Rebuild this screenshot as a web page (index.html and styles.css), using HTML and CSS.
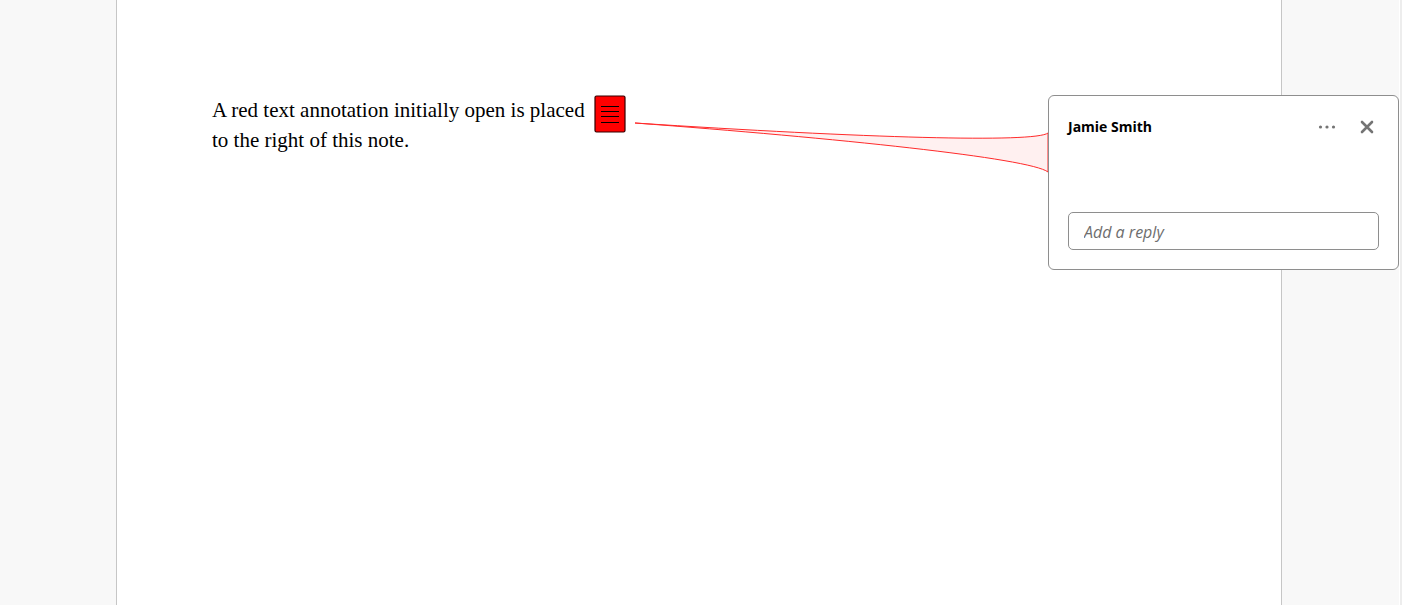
FILE: index.html
```html
<!DOCTYPE html>
<html lang="en">
<head>
    <meta charset="UTF-8">
    <meta name="viewport" content="width=device-width, initial-scale=1.0">
    <title>Text Annotation</title>
    <link rel="stylesheet" href="styles.css">
</head>
<body>
    <div class="viewer">
        <main class="page">
            <p class="note-text">A red text annotation initially open is placed<br>to the right of this note.</p>
            <button type="button" class="note-icon" aria-label="Open annotation">
                <svg width="32" height="38" viewBox="0 0 32 38">
                    <rect x="1" y="1" width="30" height="36" rx="1.5" fill="#f00" stroke="#300" stroke-width="1.2"/>
                    <path d="M7 11.5h18M7 16.5h18M7 21.5h18M7 27.5h18" stroke="#000" stroke-width="1" shape-rendering="crispEdges"/>
                </svg>
            </button>
        </main>

        <!-- Connector from the note icon to its popup -->
        <svg class="connector" viewBox="0 0 414 56" preserveAspectRatio="none">
            <path d="M0 3C230 18 400 23 413 13V52C395 38 200 18 0 3Z" fill="#fff0f0"/>
            <path d="M0 3C230 18 400 23 413 13V52C395 38 200 18 0 3" fill="none" stroke="#ff2a2a"/>
        </svg>

        <section class="popup">
            <header class="popup-header">
                <h2 class="author">Jamie Smith</h2>
                <button type="button" class="icon-button" aria-label="Options">
                    <svg width="18" height="18" viewBox="0 0 18 18" fill="#747474">
                        <circle cx="2.5" cy="9" r="1.6"/>
                        <circle cx="9" cy="9" r="1.6"/>
                        <circle cx="15.5" cy="9" r="1.6"/>
                    </svg>
                </button>
                <button type="button" class="icon-button" aria-label="Close">
                    <svg width="18" height="18" viewBox="0 0 18 18">
                        <path d="M4 4L14 14M14 4L4 14" stroke="#747474" stroke-width="2.6" stroke-linecap="round"/>
                    </svg>
                </button>
            </header>
            <input type="text" class="reply" placeholder="Add a reply" aria-label="Add a reply">
        </section>
    </div>
</body>
</html>
```

FILE: styles.css
```css
* {
    box-sizing: border-box;
}
body {
    margin: 0;
    background: #fff;
}
/* Document area with the scroll gutter on the right */
.viewer {
    position: relative;
    display: flex;
    min-height: 100vh;
    padding: 0 117px 0 116px;
    margin-right: 3px;
    background: #f8f8f8;
    box-shadow: 1px 0 #fff, 3px 0 #ededed;
}
.page {
    display: flex;
    flex: 1;
    align-items: flex-start;
    gap: 9px;
    padding: 95px;
    background: #fff;
    border: solid #c6c6c6;
    border-width: 0 1px;
}
.note-text {
    margin: 0;
    font-family: "Liberation Serif", "Times New Roman", serif;
    font-size: 21px;
    line-height: 30px;
    color: #000;
    white-space: nowrap;
}
button {
    padding: 0;
    border: none;
    background: none;
    cursor: pointer;
}
button svg {
    display: block;
}
/* Popup and connector float over the page */
.connector {
    position: absolute;
    top: 120px;
    left: 635px;
    width: calc(100% - 985px);
    height: 56px;
}
.popup {
    position: absolute;
    top: 95px;
    right: 0;
    width: 351px;
    padding: 20px 19px 19px;
    font-family: "Open Sans", sans-serif;
    background: #fff;
    border: 1px solid #8e8e8e;
    border-radius: 6px;
}
.popup-header {
    display: flex;
    align-items: center;
    gap: 22px;
    height: 22px;
    margin-bottom: 74px;
    padding-right: 3px;
}
.author {
    flex: 1;
    margin: 0;
    font-size: 14px;
    font-weight: 700;
    line-height: 20px;
    color: #000;
}
.reply {
    display: block;
    width: 100%;
    height: 38px;
    padding: 2px 15px 0;
    font-family: inherit;
    font-size: 16px;
    font-style: italic;
    border: 1px solid #8e8e8e;
    border-radius: 5px;
}
.reply::placeholder {
    color: #6e6e6e;
    opacity: 1;
}
```
